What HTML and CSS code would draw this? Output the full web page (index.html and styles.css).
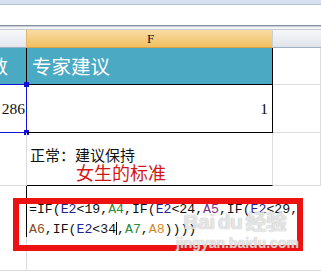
FILE: index.html
```html
<!DOCTYPE html>
<html>
<head>
<meta charset="utf-8">
<link rel="stylesheet" href="styles.css">
</head>
<body>
<div class="page">
  <div class="strip"></div>
  <div class="fbar"></div>
  <div class="sep"></div>
  <div class="gap"></div>
  <div class="sheet">
    <div class="hd hd-e"></div>
    <div class="hd hd-f">F</div>
    <div class="hd hd-g"></div>

    <div class="c e1"><span class="cut">指数</span></div>
    <div class="c f1">专家建议</div>
    <div class="c g1"></div>

    <div class="c e2">286<span class="handle h-top"></span><span class="handle h-bot"></span></div>
    <div class="c f2">1</div>
    <div class="c g2"></div>

    <div class="c e3"></div>
    <div class="c f3">
      <div class="note">正常：建议保持</div>
      <div class="red-note">女生的标准</div>
    </div>
    <div class="c g3"></div>

    <div class="c e4"></div>
    <div class="c fg4">
      <div class="editor">
        <div class="fline">=IF(<span class="r-blue">E2</span>&lt;19,<span class="r-green">A4</span>,IF(<span class="r-blue">E2</span>&lt;24,<span class="r-purple">A5</span>,IF(<span class="r-blue">E2</span>&lt;29,</div>
        <div class="fline"><span class="r-brown">A6</span>,IF(<span class="r-blue">E2</span>&lt;34<span class="caret"></span>,<span class="r-green">A7</span>,<span class="r-orange">A8</span>))))</div>
      </div>
    </div>
  </div>
  <div class="redbox"></div>
  <div class="wm">
    <div class="wm-logo">Bai<span class="wm-du">du</span>经验</div>
    <div class="wm-url">jingyan.baidu.com</div>
  </div>
</div>
</body>
</html>
```
FILE: styles.css
```css
* { box-sizing: border-box; }
html, body { margin: 0; padding: 0; background: #fff; }
.page {
  position: relative;
  width: 321px;
  height: 273px;
  overflow: hidden;
  font-family: "Liberation Sans", "Noto Sans CJK SC", sans-serif;
}
.strip { height: 5px; background: #d5e1f0; border-bottom: 1px solid #b5c4d7; }
.fbar { height: 20px; background: #fff; }
.sep { height: 2px; border-top: 1px solid #86929f; background: #c6cdd6; }
.gap { height: 2px; background: #f2f4f7; }

.sheet {
  display: grid;
  grid-template-columns: 27px 246px 48px;
  grid-template-rows: 19px 37px 48px 53px 85px;
}
.hd {
  border-top: 1px solid #c6cdd7;
  border-bottom: 1px solid #9fb0c3;
  font-family: "Liberation Serif", serif;
  font-size: 13px;
  line-height: 17px;
  text-align: center;
  color: #111;
}
.hd-e { background: linear-gradient(#f8f9fb, #e3e7ed); border-right: 1px solid #e6b56b; }
.hd-f { background: linear-gradient(#f9dca5, #f1c062); border-bottom-color: #d9a344; border-right: 1px solid #c7cfd9; padding-left: 2px; }
.hd-g { background: linear-gradient(#f6f7f9, #e0e4ea); }

.c { border-right: 1px solid #dadcdd; border-bottom: 1px solid #dadcdd; position: relative; }

.e1 {
  background: #4aa9c3;
  border-right-color: #000;
  border-bottom-color: #1414d4;
  overflow: clip;
  display: flex;
  justify-content: flex-end;
  padding-right: 18px;
}
.cut {
  flex: none;
  color: #fff;
  font-family: "Noto Sans CJK SC", sans-serif;
  font-size: 19px;
  line-height: 36px;
  white-space: nowrap;
}
.f1 {
  background: #4aa9c3;
  border-right-color: #000;
  border-bottom-color: #000;
  color: #fff;
  font-family: "Noto Sans CJK SC", sans-serif;
  font-size: 19.5px;
  line-height: 36px;
  padding-left: 5px;
}
.e2 {
  border-right-color: #1414d4;
  border-bottom-color: #1414d4;
  text-align: right;
  padding-right: 1px;
  font-family: "Liberation Serif", serif;
  font-size: 15.5px;
  line-height: 47px;
  color: #111;
}
.handle { position: absolute; right: -3px; width: 5px; height: 5px; background: #1010d8; }
.h-top { top: -3px; }
.h-bot { bottom: -3px; }
.f2 {
  border-right-color: #000;
  border-bottom-color: #000;
  text-align: right;
  padding-right: 4px;
  font-family: "Liberation Serif", serif;
  font-size: 15.5px;
  line-height: 47px;
  color: #111;
}
.f3 { border-bottom-color: #000; padding-top: 14px; padding-left: 3px; }
.note {
  font-family: "Noto Sans CJK SC", sans-serif;
  font-size: 15px;
  line-height: 15px;
  color: #111;
  white-space: nowrap;
}
.red-note {
  margin-top: 1px;
  margin-left: 46px;
  font-family: "Noto Sans CJK SC", sans-serif;
  font-size: 18px;
  line-height: 19px;
  color: #cf1818;
  white-space: nowrap;
}
.fg4 { grid-column: span 2; border-right: none; }
.editor {
  margin-left: -1px;
  height: 51px;
  border-left: 1px solid #000;
  padding: 14px 0 0 2px;
  font-family: "Liberation Mono", monospace;
  font-size: 13.2px;
  line-height: 20px;
  color: #111;
  white-space: nowrap;
}
.fline { height: 20px; }
.r-blue { color: #23238f; }
.r-green { color: #2b8a3a; }
.r-purple { color: #7b2f8c; }
.r-brown { color: #8c4a1c; }
.r-orange { color: #d68a2a; }
.caret { display: inline-block; width: 1px; height: 13px; background: #000; vertical-align: -2px; }

.redbox {
  position: absolute;
  left: 13px;
  top: 198px;
  width: 290px;
  height: 53px;
  border: 6px solid #ee1111;
}
.wm {
  position: absolute;
  left: 176px;
  top: 209px;
  width: 118px;
  color: rgba(255, 255, 255, 0.7);
  text-shadow: 0 0 1px rgba(130, 130, 130, 0.45), 0 0 1px rgba(130, 130, 130, 0.45);
  font-family: "Liberation Sans", "Noto Sans CJK SC", sans-serif;
  font-weight: bold;
  text-align: center;
}
.wm-logo { font-size: 21px; line-height: 26px; white-space: nowrap; letter-spacing: -0.5px; }
.wm-du { margin: 0 3px; }
.wm-url { font-size: 14px; line-height: 16px; white-space: nowrap; }
```
